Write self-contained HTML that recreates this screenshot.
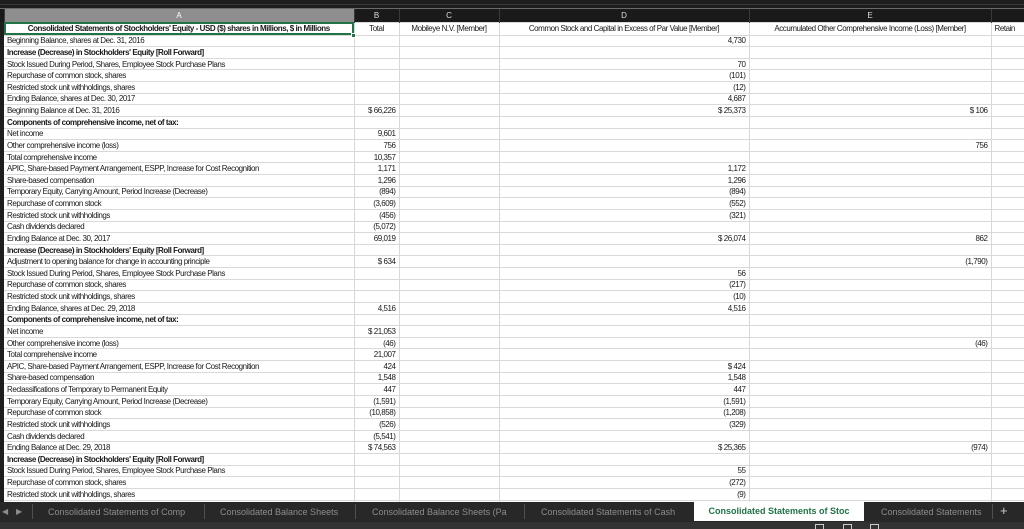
<!DOCTYPE html>
<html><head><meta charset="utf-8"><style>
*{margin:0;padding:0;box-sizing:border-box}
body{width:1024px;height:529px;overflow:hidden;background:#fff;position:relative;font-family:"Liberation Sans",sans-serif}
#top{position:absolute;left:0;top:0;width:1024px;height:9px;background:#1e1e1e;border-bottom:1px solid #6a6a6a}
#top:before{content:"";position:absolute;left:0;top:4px;width:1024px;height:1px;background:#3a3a3a}
table{position:absolute;left:0;top:9px;border-collapse:collapse;table-layout:fixed;width:1024px}
td{border:1px solid #d9d9d9;height:11.63px;font-size:8px;letter-spacing:-0.45px;line-height:9px;padding:0 3px;white-space:nowrap;overflow:hidden;color:#1a1a1a;text-align:right}
td.a{text-align:left;border-left:none}
td.rh{background:#1e1e1e;border:none;padding:0}
tr.h td{background:#1a1a1a;color:#ddd;height:13px;text-align:center;border:none;border-right:1px solid #3a3a3a;font-size:8px;letter-spacing:0}
tr.h td.sel{background:#8e8e8e;color:#fff}
tr.r1 td{height:13px;text-align:center}
tr.b td.a{font-weight:bold}
td.cell1{outline:2px solid #217346;outline-offset:-2px;font-weight:bold;position:relative}
#handle{position:absolute;left:351px;top:33px;width:5px;height:5px;background:#217346;border:1px solid #fff}
#tabs{position:absolute;left:0;top:502px;width:1024px;height:20px;background:#282828;font-size:9px;color:#8c8c8c}
#tabs span{position:absolute;top:5px;white-space:nowrap}
.sep{position:absolute;top:2px;width:1px;height:15px;background:#505050}
#act{position:absolute;left:694px;top:0;width:170px;height:19px;background:#fff;color:#217346;text-align:center;line-height:19px;font-weight:bold;font-size:9px}
#status{position:absolute;left:0;top:522px;width:1024px;height:7px;background:#333}
.ic{position:absolute;top:2px;width:9px;height:5px;border:1px solid #ccc;border-bottom:none}
</style></head><body>
<div id="top"></div>
<table>
<colgroup><col style="width:4px"><col style="width:350px"><col style="width:45px"><col style="width:100px"><col style="width:250px"><col style="width:242px"><col style="width:33px"></colgroup>
<tr class="h"><td class="rh"></td><td class="sel">A</td><td>B</td><td>C</td><td>D</td><td>E</td><td></td></tr>
<tr class="r1"><td class="rh"></td><td class="a cell1" style="text-align:center">Consolidated Statements of Stockholders' Equity - USD ($) shares in Millions, $ in Millions</td><td>Total</td><td>Mobileye N.V. [Member]</td><td>Common Stock and Capital in Excess of Par Value [Member]</td><td>Accumulated Other Comprehensive Income (Loss) [Member]</td><td style="text-align:left">Retain</td></tr>
<tr><td class="rh"></td><td class="a">Beginning Balance, shares at Dec. 31, 2016</td><td></td><td></td><td>4,730</td><td></td><td></td></tr>
<tr class="b"><td class="rh"></td><td class="a">Increase (Decrease) in Stockholders' Equity [Roll Forward]</td><td></td><td></td><td></td><td></td><td></td></tr>
<tr><td class="rh"></td><td class="a">Stock Issued During Period, Shares, Employee Stock Purchase Plans</td><td></td><td></td><td>70</td><td></td><td></td></tr>
<tr><td class="rh"></td><td class="a">Repurchase of common stock, shares</td><td></td><td></td><td>(101)</td><td></td><td></td></tr>
<tr><td class="rh"></td><td class="a">Restricted stock unit withholdings, shares</td><td></td><td></td><td>(12)</td><td></td><td></td></tr>
<tr><td class="rh"></td><td class="a">Ending Balance, shares at Dec. 30, 2017</td><td></td><td></td><td>4,687</td><td></td><td></td></tr>
<tr><td class="rh"></td><td class="a">Beginning Balance at Dec. 31, 2016</td><td>$ 66,226</td><td></td><td>$ 25,373</td><td>$ 106</td><td></td></tr>
<tr class="b"><td class="rh"></td><td class="a">Components of comprehensive income, net of tax:</td><td></td><td></td><td></td><td></td><td></td></tr>
<tr><td class="rh"></td><td class="a">Net income</td><td>9,601</td><td></td><td></td><td></td><td></td></tr>
<tr><td class="rh"></td><td class="a">Other comprehensive income (loss)</td><td>756</td><td></td><td></td><td>756</td><td></td></tr>
<tr><td class="rh"></td><td class="a">Total comprehensive income</td><td>10,357</td><td></td><td></td><td></td><td></td></tr>
<tr><td class="rh"></td><td class="a">APIC, Share-based Payment Arrangement, ESPP, Increase for Cost Recognition</td><td>1,171</td><td></td><td>1,172</td><td></td><td></td></tr>
<tr><td class="rh"></td><td class="a">Share-based compensation</td><td>1,296</td><td></td><td>1,296</td><td></td><td></td></tr>
<tr><td class="rh"></td><td class="a">Temporary Equity, Carrying Amount, Period Increase (Decrease)</td><td>(894)</td><td></td><td>(894)</td><td></td><td></td></tr>
<tr><td class="rh"></td><td class="a">Repurchase of common stock</td><td>(3,609)</td><td></td><td>(552)</td><td></td><td></td></tr>
<tr><td class="rh"></td><td class="a">Restricted stock unit withholdings</td><td>(456)</td><td></td><td>(321)</td><td></td><td></td></tr>
<tr><td class="rh"></td><td class="a">Cash dividends declared</td><td>(5,072)</td><td></td><td></td><td></td><td></td></tr>
<tr><td class="rh"></td><td class="a">Ending Balance at Dec. 30, 2017</td><td>69,019</td><td></td><td>$ 26,074</td><td>862</td><td></td></tr>
<tr class="b"><td class="rh"></td><td class="a">Increase (Decrease) in Stockholders' Equity [Roll Forward]</td><td></td><td></td><td></td><td></td><td></td></tr>
<tr><td class="rh"></td><td class="a">Adjustment to opening balance for change in accounting principle</td><td>$ 634</td><td></td><td></td><td>(1,790)</td><td></td></tr>
<tr><td class="rh"></td><td class="a">Stock Issued During Period, Shares, Employee Stock Purchase Plans</td><td></td><td></td><td>56</td><td></td><td></td></tr>
<tr><td class="rh"></td><td class="a">Repurchase of common stock, shares</td><td></td><td></td><td>(217)</td><td></td><td></td></tr>
<tr><td class="rh"></td><td class="a">Restricted stock unit withholdings, shares</td><td></td><td></td><td>(10)</td><td></td><td></td></tr>
<tr><td class="rh"></td><td class="a">Ending Balance, shares at Dec. 29, 2018</td><td>4,516</td><td></td><td>4,516</td><td></td><td></td></tr>
<tr class="b"><td class="rh"></td><td class="a">Components of comprehensive income, net of tax:</td><td></td><td></td><td></td><td></td><td></td></tr>
<tr><td class="rh"></td><td class="a">Net income</td><td>$ 21,053</td><td></td><td></td><td></td><td></td></tr>
<tr><td class="rh"></td><td class="a">Other comprehensive income (loss)</td><td>(46)</td><td></td><td></td><td>(46)</td><td></td></tr>
<tr><td class="rh"></td><td class="a">Total comprehensive income</td><td>21,007</td><td></td><td></td><td></td><td></td></tr>
<tr><td class="rh"></td><td class="a">APIC, Share-based Payment Arrangement, ESPP, Increase for Cost Recognition</td><td>424</td><td></td><td>$ 424</td><td></td><td></td></tr>
<tr><td class="rh"></td><td class="a">Share-based compensation</td><td>1,548</td><td></td><td>1,548</td><td></td><td></td></tr>
<tr><td class="rh"></td><td class="a">Reclassifications of Temporary to Permanent Equity</td><td>447</td><td></td><td>447</td><td></td><td></td></tr>
<tr><td class="rh"></td><td class="a">Temporary Equity, Carrying Amount, Period Increase (Decrease)</td><td>(1,591)</td><td></td><td>(1,591)</td><td></td><td></td></tr>
<tr><td class="rh"></td><td class="a">Repurchase of common stock</td><td>(10,858)</td><td></td><td>(1,208)</td><td></td><td></td></tr>
<tr><td class="rh"></td><td class="a">Restricted stock unit withholdings</td><td>(526)</td><td></td><td>(329)</td><td></td><td></td></tr>
<tr><td class="rh"></td><td class="a">Cash dividends declared</td><td>(5,541)</td><td></td><td></td><td></td><td></td></tr>
<tr><td class="rh"></td><td class="a">Ending Balance at Dec. 29, 2018</td><td>$ 74,563</td><td></td><td>$ 25,365</td><td>(974)</td><td></td></tr>
<tr class="b"><td class="rh"></td><td class="a">Increase (Decrease) in Stockholders' Equity [Roll Forward]</td><td></td><td></td><td></td><td></td><td></td></tr>
<tr><td class="rh"></td><td class="a">Stock Issued During Period, Shares, Employee Stock Purchase Plans</td><td></td><td></td><td>55</td><td></td><td></td></tr>
<tr><td class="rh"></td><td class="a">Repurchase of common stock, shares</td><td></td><td></td><td>(272)</td><td></td><td></td></tr>
<tr><td class="rh"></td><td class="a">Restricted stock unit withholdings, shares</td><td></td><td></td><td>(9)</td><td></td><td></td></tr>
<tr><td class="rh"></td><td class="a">&nbsp;</td><td></td><td></td><td></td><td></td><td></td></tr>
</table>
<div id="handle"></div>
<div id="tabs">
<span style="left:2px;font-size:8px;top:5px">◀</span><span style="left:16px;font-size:8px;top:5px">▶</span>
<div class="sep" style="left:32px"></div>
<span style="left:48px">Consolidated Statements of Comp</span>
<div class="sep" style="left:204px"></div>
<span style="left:220px">Consolidated Balance Sheets</span>
<div class="sep" style="left:355px"></div>
<span style="left:372px">Consolidated Balance Sheets (Pa</span>
<div class="sep" style="left:524px"></div>
<span style="left:541px">Consolidated Statements of Cash</span>
<div id="act">Consolidated Statements of Stoc</div>
<span style="left:881px;width:109px;overflow:hidden">Consolidated Statements</span>
<div class="sep" style="left:992px"></div>
<span style="left:1000px;font-size:13px;top:1px;color:#ccc">+</span>
</div>
<div id="status">
<div class="ic" style="left:815px"></div><div class="ic" style="left:843px"></div><div class="ic" style="left:870px"></div>
</div>
</body></html>
